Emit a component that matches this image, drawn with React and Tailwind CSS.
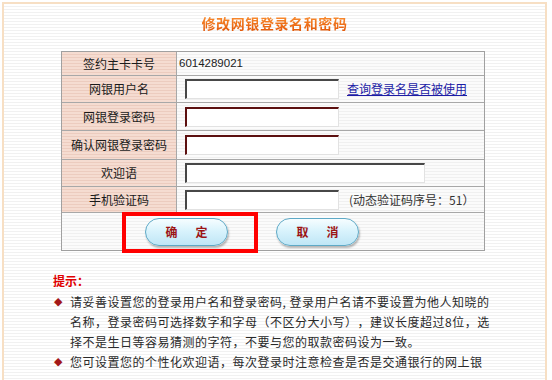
import React from 'react';

const labelBg =
  'bg-[repeating-linear-gradient(to_bottom,#f5dcd1_0px,#f5dcd1_2px,#ecccbf_2px,#ecccbf_3px)]';
const valueBg =
  'bg-[repeating-linear-gradient(to_bottom,#fbfbfb_0px,#fbfbfb_2px,#f0f0f0_2px,#f0f0f0_3px)]';

function Row({ label, height, first, children }) {
  return (
    <div className={`flex ${height} ${first ? '' : 'border-t border-[#a8a8a8]'}`}>
      <div
        className={`flex w-[115px] shrink-0 items-center justify-center border-r border-[#a8a8a8] text-[12px] leading-[16px] text-[#1a1a1a] ${labelBg}`}
      >
        {label}
      </div>
      <div className={`flex flex-1 items-center ${valueBg}`}>{children}</div>
    </div>
  );
}

function Field({ wide, secret }) {
  return (
    <input
      type={secret ? 'password' : 'text'}
      className={`ml-[8px] h-[20px] border-t-2 border-l-2 border-r border-b border-r-[#e2e2e2] border-b-[#e2e2e2] bg-white outline-none ${
        wide ? 'w-[240px]' : 'w-[154px]'
      } ${secret ? 'border-t-[#5c1010] border-l-[#5c1010]' : 'border-t-[#474747] border-l-[#474747]'}`}
    />
  );
}

function PillButton({ first, second }) {
  return (
    <button
      type="button"
      className="flex h-[28px] w-[83px] items-center justify-center gap-[18px] rounded-full border border-[#5ea9c6] bg-[linear-gradient(to_bottom,#f6fdff_0%,#d9f3fc_45%,#bfe6f6_100%)] text-[12px] leading-[16px] font-semibold text-[#9c1414] shadow-[1px_2px_2px_rgba(0,0,0,0.28)]"
    >
      <span>{first}</span>
      <span>{second}</span>
    </button>
  );
}

const tips = [
  '请妥善设置您的登录用户名和登录密码, 登录用户名请不要设置为他人知晓的名称，登录密码可选择数字和字母（不区分大小写），建议长度超过8位，选择不是生日等容易猜测的字符，不要与您的取款密码设为一致。',
  '您可设置您的个性化欢迎语，每次登录时注意检查是否是交通银行的网上银行，以防止假冒网站骗取您的信息。',
];

export default function App() {
  return (
    <div className="relative h-[380px] w-[552px] overflow-hidden bg-white font-['Noto_Sans_CJK_SC',sans-serif]">
      <div className="ml-[2px] mt-[2px] h-[420px] w-[545px] border-2 border-[#f7dfc4] bg-[repeating-linear-gradient(to_bottom,#ffffff_0px,#ffffff_2px,#f1f1f1_2px,#f1f1f1_3px)]">
        <div className="h-[28px] pt-[6px] text-center">
          <span className="bg-[linear-gradient(to_bottom,#ff9838,#e05204)] bg-clip-text text-[14px] leading-[16px] font-bold tracking-[0.6px] text-transparent">
            修改网银登录名和密码
          </span>
        </div>

        <div className="ml-[57px] mt-[19px] w-[424px] border border-[#a0a0a0]">
          <Row label="签约主卡卡号" height="h-[23px]" first>
            <span className="pl-[2px] font-['Liberation_Sans',sans-serif] text-[11.5px] text-[#222]">
              6014289021
            </span>
          </Row>
          <Row label="网银用户名" height="h-[27px]">
            <Field />
            <a href="#" className="ml-[8px] text-[12px] leading-[16px] text-[#1c1ca6] underline">
              查询登录名是否被使用
            </a>
          </Row>
          <Row label="网银登录密码" height="h-[28px]">
            <Field secret />
          </Row>
          <Row label="确认网银登录密码" height="h-[29px]">
            <Field secret />
          </Row>
          <Row label="欢迎语" height="h-[27px]">
            <Field wide />
          </Row>
          <Row label="手机验证码" height="h-[26px]">
            <Field />
            <span className="ml-[10px] text-[12px] leading-[16px] text-[#333]">(动态验证码序号：51）</span>
          </Row>
          <div className={`flex h-[38px] items-center gap-[48px] border-t border-[#a8a8a8] pl-[83px] ${valueBg}`}>
            <PillButton first="确" second="定" />
            <PillButton first="取" second="消" />
          </div>
        </div>

        <div className="ml-[49px] mt-[20px] max-h-[102px] overflow-hidden">
          <div className="text-[12px] leading-[20px] font-bold text-[#e00000]">提示：</div>
          <ul className="mt-[1px]">
            {tips.map((tip) => (
              <li key={tip} className="flex">
                <span className="w-[17px] shrink-0 pl-[1px] font-['DejaVu_Sans',sans-serif] text-[11px] leading-[20px] text-[#a31818]">
                  ◆
                </span>
                <p className="w-[421px] text-[12px] leading-[20px] tracking-[0.5px] text-[#2a2a2a] [text-spacing-trim:space-all]">
                  {tip}
                </p>
              </li>
            ))}
          </ul>
        </div>
      </div>

      <div className="absolute left-[122px] top-[212px] h-[41px] w-[136px] border-4 border-[#ff0000]" />
    </div>
  );
}
